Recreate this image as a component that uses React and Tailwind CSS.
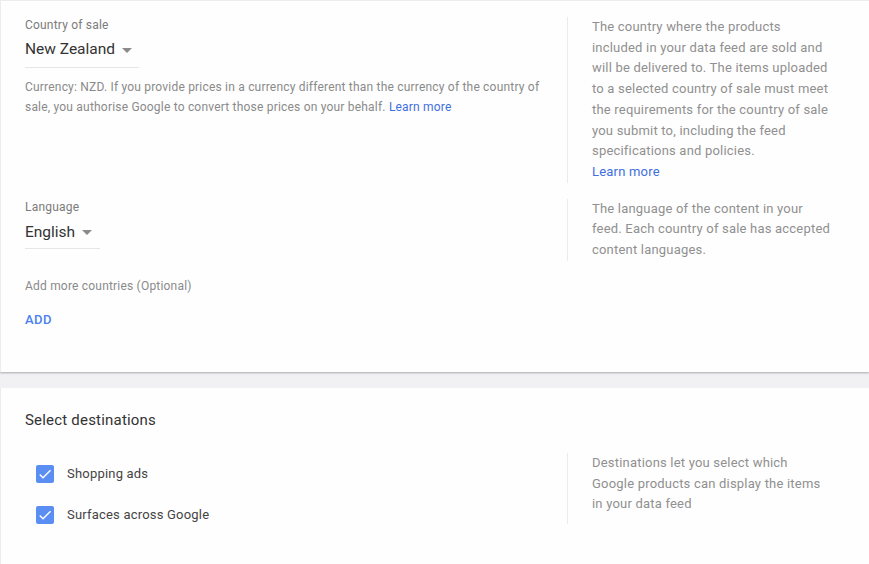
import React from "react";

function Arrow() {
  return (
    <svg width="10" height="5" viewBox="0 0 10 5" className="ml-[7px] mt-[2px]">
      <path d="M0 0 L10 0 L5 5 Z" fill="#8a8a8a" />
    </svg>
  );
}

function Check() {
  return (
    <div className="w-[18px] h-[18px] rounded-[2px] bg-[#5a8ef2] flex items-center justify-center">
      <svg width="16" height="16" viewBox="0 0 24 24">
        <path d="M9 16.17L4.83 12l-1.42 1.41L9 19 21 7l-1.41-1.41z" fill="#ffffff" />
      </svg>
    </div>
  );
}

function Side({ children }) {
  return (
    <div className="border-l border-[#ebebeb] pl-6">
      <p className="whitespace-nowrap text-[13px] tracking-[0.2px] leading-[20.7px] text-[#909090]">
        {children}
      </p>
    </div>
  );
}

export default function App() {
  return (
    <div className="min-h-[564px] w-[869px] bg-[#f1f0f3] font-['Roboto',sans-serif] overflow-hidden">
      <div className="h-[372px] bg-[#fefefe] border-t border-l border-[#ececec] shadow-[0_1px_2px_rgba(0,0,0,0.3)] pt-4 pl-6">
        <div className="flex">
          <div className="w-[542px] pr-4">
            <div className="text-xs tracking-[0.2px] leading-4 text-[#7b7b7b]">Country of sale</div>
            <div className="mt-1 w-[114px] pb-[6px] border-b border-[#e6e6e6] flex items-center">
              <span className="text-[15.5px] leading-6 text-[#333]">New Zealand</span>
              <Arrow />
            </div>
            <p className="mt-[9px] whitespace-nowrap text-xs tracking-[0.2px] leading-5 text-[#8a8a8a]">
              Currency: NZD. If you provide prices in a currency different than the currency of the country of
              <br />
              sale, you authorise Google to convert those prices on your behalf.{" "}
              <span className="text-[#3f6fe0]">Learn more</span>
            </p>
          </div>
          <Side>
            The country where the products
            <br />
            included in your data feed are sold and
            <br />
            will be delivered to. The items uploaded
            <br />
            to a selected country of sale must meet
            <br />
            the requirements for the country of sale
            <br />
            you submit to, including the feed
            <br />
            specifications and policies.
            <br />
            <span className="text-[#3f6fe0]">Learn more</span>
          </Side>
        </div>

        <div className="flex mt-4">
          <div className="w-[542px] pr-4">
            <div className="text-xs tracking-[0.2px] leading-4 text-[#7b7b7b]">Language</div>
            <div className="mt-[5px] w-[75px] pb-[4px] border-b border-[#e6e6e6] flex items-center">
              <span className="text-[15.5px] leading-6 text-[#333]">English</span>
              <Arrow />
            </div>
          </div>
          <Side>
            The language of the content in your
            <br />
            feed. Each country of sale has accepted
            <br />
            content languages.
          </Side>
        </div>

        <div className="mt-[17px] text-xs tracking-[0.2px] leading-4 text-[#8a8a8a]">Add more countries (Optional)</div>
        <div className="mt-4 text-[13px] tracking-[0.5px] leading-5 font-medium text-[#4a80f0]">ADD</div>
      </div>

      <div className="mt-4 h-[176px] bg-[#fefefe] border-l border-[#ececec] pt-5 pl-6">
        <div className="text-[15px] tracking-[0.2px] leading-6 text-[#333]">Select destinations</div>
        <div className="flex mt-[21px]">
          <div className="w-[542px] pl-[11px] pt-3 flex flex-col gap-[23px]">
            <div className="flex items-center">
              <Check />
              <span className="ml-[13px] text-[13px] tracking-[0.2px] leading-[18px] text-[#444]">Shopping ads</span>
            </div>
            <div className="flex items-center">
              <Check />
              <span className="ml-[13px] text-[13px] tracking-[0.2px] leading-[18px] text-[#444]">Surfaces across Google</span>
            </div>
          </div>
          <Side>
            Destinations let you select which
            <br />
            Google products can display the items
            <br />
            in your data feed
          </Side>
        </div>
      </div>
    </div>
  );
}
